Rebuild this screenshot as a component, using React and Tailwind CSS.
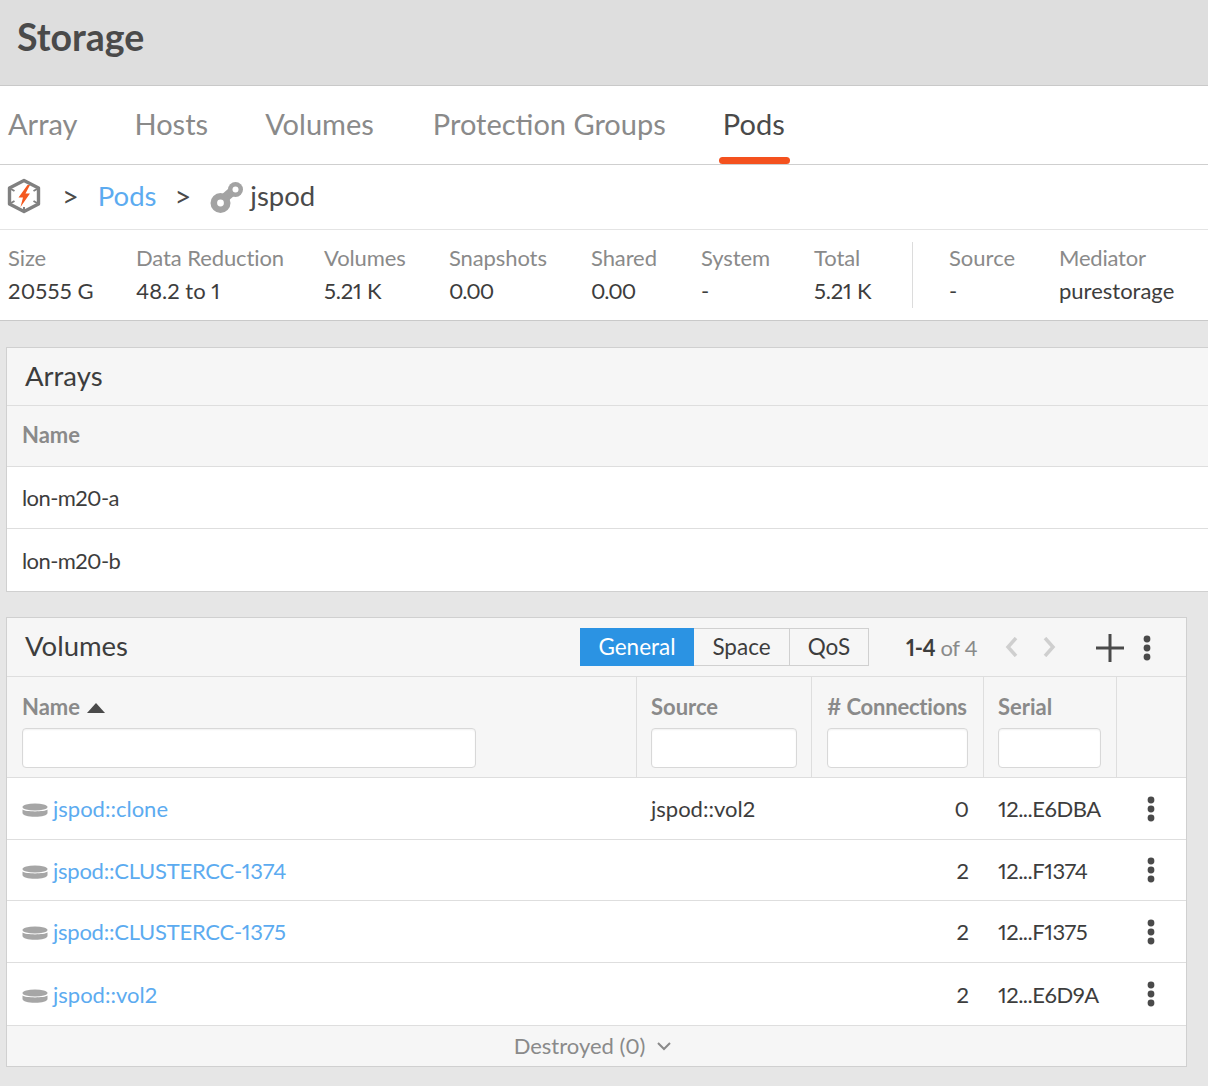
import React from "react";

const font = "font-['Lato','Noto_Sans',sans-serif]";

const tabs = [
  { label: "Array", mr: "mr-[57px]" },
  { label: "Hosts", mr: "mr-[57px]" },
  { label: "Volumes", mr: "mr-[59px]" },
  { label: "Protection Groups", mr: "mr-[57px]" },
];

const stats = [
  { label: "Size", value: "20555 G", w: "w-[128px]", track: "tracking-[0.2px]" },
  { label: "Data Reduction", value: "48.2 to 1", w: "w-[188px]", track: "" },
  { label: "Volumes", value: "5.21 K", w: "w-[125px]", track: "tracking-[-0.2px]" },
  { label: "Snapshots", value: "0.00", w: "w-[142px]", track: "tracking-[-1px]" },
  { label: "Shared", value: "0.00", w: "w-[110px]", track: "tracking-[-1px]" },
  { label: "System", value: "-", w: "w-[113px]", track: "" },
  { label: "Total", value: "5.21 K", w: "w-[98px]", track: "tracking-[-0.2px]" },
];

const volumes = [
  { name: "jspod::clone", source: "jspod::vol2", conn: "0", serial: "12...E6DBA", h: "h-[62px]", track: "" },
  { name: "jspod::CLUSTERCC-1374", source: "", conn: "2", serial: "12...F1374", h: "h-[61px]", track: "tracking-[-0.25px]" },
  { name: "jspod::CLUSTERCC-1375", source: "", conn: "2", serial: "12...F1375", h: "h-[62px]", track: "tracking-[-0.25px]" },
  { name: "jspod::vol2", source: "", conn: "2", serial: "12...E6D9A", h: "h-[63px]", track: "" },
];

function Kebab({ className }) {
  return (
    <svg width="8" height="26" viewBox="0 0 8 26" className={className}>
      <circle cx="4" cy="4" r="3.4" fill="#4a4a4a" />
      <circle cx="4" cy="13" r="3.4" fill="#4a4a4a" />
      <circle cx="4" cy="22" r="3.4" fill="#4a4a4a" />
    </svg>
  );
}

function PureLogo() {
  return (
    <svg width="34" height="36" viewBox="0 0 34 36">
      <path
        d="M17 2.5 L31.5 10 V26 L17 33.5 L2.5 26 V10 Z"
        fill="none"
        stroke="#808080"
        strokeWidth="3.4"
        strokeLinejoin="round"
      />
      <path d="M4 11l3.5 2M30 11l-3.5 2M4 25l3.5-2M30 25l-3.5-2M17 33v-4" stroke="#808080" strokeWidth="2" />
      <path d="M20.5 7 L11.5 19.5 H16 L13.5 29 L23 15.5 H18.5 L23 7 Z" fill="#f4581f" />
    </svg>
  );
}

function PodIcon() {
  return (
    <svg width="34" height="34" viewBox="0 0 34 34">
      <path d="M10 21 L25 8" stroke="#a3a3a3" strokeWidth="9" />
      <circle cx="10.5" cy="22" r="10" fill="#a3a3a3" />
      <circle cx="10.5" cy="22" r="3.4" fill="#fff" />
      <circle cx="25.5" cy="8.5" r="7.5" fill="#a3a3a3" />
      <circle cx="25.5" cy="8.5" r="3" fill="#fff" />
    </svg>
  );
}

function VolumeIcon() {
  return (
    <svg width="26" height="16" viewBox="0 0 26 16" className="shrink-0 mt-[3px]">
      <ellipse cx="13" cy="5" rx="12.5" ry="3.6" fill="#a6a6a6" />
      <path d="M0.5 7.5 C3 10 23 10 25.5 7.5 V11 C25.5 13.2 20 14.8 13 14.8 C6 14.8 0.5 13.2 0.5 11 Z" fill="#a6a6a6" />
    </svg>
  );
}

function FilterInput({ className }) {
  return (
    <input
      type="text"
      className={`h-[40px] bg-white border border-[#d8d8d8] rounded-[4px] shadow-[inset_0_1px_2px_rgba(0,0,0,0.06)] ${className}`}
    />
  );
}

export default function App() {
  return (
    <div className={`${font} proportional-nums w-[1208px] h-[1086px] overflow-hidden bg-[#e6e6e6] text-[#3d3d3d]`}>
      <header className="h-[86px] bg-[#dedede] border-b border-[#c9c9c9] pl-[17px] pt-[14px]">
        <h1 className="text-[37.5px] leading-[46px] font-bold text-[#4a4a4a]">Storage</h1>
      </header>

      <nav className="h-[79px] bg-white border-b border-[#cfcfcf] flex items-start pl-[8px]">
        {tabs.map((t) => (
          <a key={t.label} className={`${t.mr} pt-[20px] text-[29px] leading-[36px] text-[#8a8a8a]`}>
            {t.label}
          </a>
        ))}
        <a className="relative pt-[20px] text-[29px] leading-[36px] text-[#4a4a4a]">
          Pods
          <span className="absolute left-[-4px] right-[-5px] top-[71px] h-[7px] rounded-[4px] bg-[#f4511e]" />
        </a>
      </nav>

      <div className="h-[65px] bg-white border-b border-[#e4e4e4] flex items-center pl-[7px] pb-[2px] text-[27.5px]">
        <PureLogo />
        <span className="ml-[21px] text-[#4a4a4a] text-[29px]">&gt;</span>
        <a className="ml-[19px] text-[#5cabf0]">Pods</a>
        <span className="ml-[18px] text-[#4a4a4a] text-[29px]">&gt;</span>
        <span className="ml-[19px] mt-[4px]"><PodIcon /></span>
        <span className="ml-[6px] text-[#4a4a4a]">jspod</span>
      </div>

      <div className="h-[91px] bg-white border-b border-[#c9c9c9] flex items-start pl-[8px] pt-[12px] text-[22px] leading-[32px]">
        {stats.map((s) => (
          <div key={s.label} className={`${s.w} shrink-0`}>
            <div className="text-[#8a8a8a] tracking-[-0.1px]">{s.label}</div>
            <div className={`mt-[1px] text-[#3d3d3d] ${s.track}`}>{s.value}</div>
          </div>
        ))}
        <div className="h-[66px] border-l border-[#dcdcdc] shrink-0 w-[37px]" />
        <div className="w-[110px] shrink-0">
          <div className="text-[#8a8a8a]">Source</div>
          <div className="mt-[1px]">-</div>
        </div>
        <div className="shrink-0">
          <div className="text-[#8a8a8a] tracking-[-0.2px]">Mediator</div>
          <div className="mt-[1px]">purestorage</div>
        </div>
      </div>

      <section className="mt-[26px] ml-[6px] bg-white border-y border-l border-[#d0d0d0]">
        <div className="h-[58px] bg-[#f6f6f6] border-b border-[#dedede] flex items-center pl-[18px] pb-[2px] text-[27.5px] text-[#3d3d3d]">
          Arrays
        </div>
        <div className="h-[61px] bg-[#f6f6f6] border-b border-[#dedede] flex items-center pl-[15px] pb-[3px] text-[22px] font-bold text-[#8a8a8a]">
          Name
        </div>
        <div className="h-[62px] border-b border-[#dedede] flex items-center pl-[15px] text-[22px] tracking-[-0.6px]">lon-m20-a</div>
        <div className="h-[62px] flex items-center pl-[15px] text-[22px] tracking-[-0.6px]">lon-m20-b</div>
      </section>

      <section className="mt-[25px] ml-[6px] w-[1181px] bg-white border border-[#d0d0d0]">
        <div className="h-[59px] bg-[#f6f6f6] border-b border-[#dedede] flex items-center pl-[18px]">
          <span className="text-[27.5px] text-[#3d3d3d] mb-[2px]">Volumes</span>
          <div className="ml-auto flex h-[38px] text-[22.5px]">
            <button className="w-[114px] bg-[#2b93e3] text-white">General</button>
            <button className="w-[96px] border-y border-r border-[#d0d0d0] text-[#3d3d3d]">Space</button>
            <button className="w-[79px] border-y border-r border-[#d0d0d0] text-[#3d3d3d]">QoS</button>
          </div>
          <span className="ml-[37px] w-[99px] text-[22px] tracking-[-0.4px]">
            <b className="text-[#3d3d3d]">1-4</b> <span className="text-[#8a8a8a]">of 4</span>
          </span>
          <svg width="52" height="20" viewBox="0 0 52 20">
            <path d="M11 1 L3 10 L11 19" fill="none" stroke="#cfcfcf" strokeWidth="3.5" />
            <path d="M40 1 L48 10 L40 19" fill="none" stroke="#cfcfcf" strokeWidth="3.5" />
          </svg>
          <svg width="28" height="28" viewBox="0 0 28 28" className="ml-[39px] mt-[2px]">
            <path d="M14 0v28M0 14h28" stroke="#4a4a4a" strokeWidth="3" />
          </svg>
          <Kebab className="ml-[19px] mr-[35px] mt-[2px]" />
        </div>

        <div className="h-[101px] bg-[#f6f6f6] border-b border-[#dedede] grid grid-cols-[630px_175px_172px_133px_1fr] text-[22px] font-bold text-[#8a8a8a]">
          <div className="border-r border-[#dedede] pl-[15px] pt-[13px]">
            <div className="h-[32px] mb-[6px] flex items-center gap-[7px]">
              Name
              <svg width="18" height="10" viewBox="0 0 18 10" className="mt-[4px]"><path d="M0 10 L9 0 L18 10 Z" fill="#4a4a4a" /></svg>
            </div>
            <FilterInput className="w-[454px] block" />
          </div>
          <div className="border-r border-[#dedede] pl-[14px] pt-[14px]">
            <div className="h-[37px] leading-[32px]">Source</div>
            <FilterInput className="w-[146px] block" />
          </div>
          <div className="border-r border-[#dedede] pl-[15px] pt-[14px]">
            <div className="h-[37px] leading-[32px] whitespace-nowrap tracking-[-0.2px]">
              # Connections
            </div>
            <FilterInput className="w-[141px] block" />
          </div>
          <div className="border-r border-[#dedede] pl-[14px] pt-[14px]">
            <div className="h-[37px] leading-[32px]">Serial</div>
            <FilterInput className="w-[103px] block" />
          </div>
          <div />
        </div>

        {volumes.map((v) => (
          <div
            key={v.name}
            className={`${v.h} border-b border-[#dedede] grid grid-cols-[630px_175px_172px_133px_1fr] items-center text-[22px]`}
          >
            <div className="pl-[15px] flex items-center gap-[5px]">
              <VolumeIcon />
              <a className={`text-[#5cabf0] ${v.track}`}>{v.name}</a>
            </div>
            <div className="pl-[14px]">{v.source}</div>
            <div className="text-right pr-[15px]">{v.conn}</div>
            <div className="pl-[14px] tracking-[-0.5px] whitespace-nowrap">{v.serial}</div>
            <div className="flex justify-center pr-[2px]">
              <Kebab />
            </div>
          </div>
        ))}

        <div className="h-[40px] bg-[#f6f6f6] flex items-center justify-center gap-[12px] pr-[8px] pb-[2px] text-[22px] text-[#8a8a8a]">
          Destroyed (0)
          <svg width="14" height="9" viewBox="0 0 14 9" className="mt-[3px]"><path d="M1 1 L7 7 L13 1" fill="none" stroke="#8a8a8a" strokeWidth="2" /></svg>
        </div>
      </section>
    </div>
  );
}
